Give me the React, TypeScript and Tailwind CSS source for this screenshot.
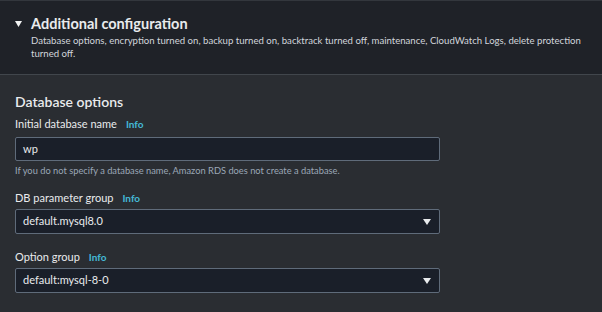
const Info = () => (
  <span className="text-[10px] font-bold text-[#44b9d6] ml-[9px]">Info</span>
);

const Caret = () => (
  <svg width="8" height="6" viewBox="0 0 8 6" className="fill-[#e9ebed]">
    <path d="M0 0h8L4 6z" />
  </svg>
);

const SelectBox = ({ value }: { value: string }) => (
  <div className="w-[425px] h-[25px] border border-[#5f6b7a] bg-[#1a1f29] rounded-[2px] flex items-center justify-between pl-[7px] pr-[8px] text-[11px] text-[#e9ebed]">
    <span>{value}</span>
    <Caret />
  </div>
);

export default function App() {
  return (
    <div
      className="w-[602px] h-[312px] bg-[#2a2d32] text-[#e9ebed] overflow-hidden"
      style={{ fontFamily: 'Lato, "Open Sans", sans-serif' }}
    >
      {/* header */}
      <div className="h-[75px] bg-[#1f2228] border-t border-[#33373d] border-b border-b-[#41464c] pl-[15px] pt-[13px]">
        <div className="flex items-center gap-[9px]">
          <svg width="7" height="6" viewBox="0 0 7 6" className="fill-[#f2f3f3]">
            <path d="M0 0h7L3.5 6z" />
          </svg>
          <h2 className="text-[14.5px] font-bold leading-[20px]">Additional configuration</h2>
        </div>
        <p className="ml-[16px] mt-[1px] text-[9.6px] leading-[12.5px] text-[#d1d5db] pr-[18px]">
          Database options, encryption turned on, backup turned on, backtrack turned off, maintenance, CloudWatch Logs, delete protection turned off.
        </p>
      </div>

      <div className="pl-[15px] pt-[16px]">
        <h3 className="text-[14px] leading-[21px] font-semibold">Database options</h3>

        <div className="mt-[4px] flex items-center text-[11px] leading-[16px]">
          Initial database name <Info />
        </div>
        <div className="mt-[5px] w-[425px] h-[24px] border border-[#5f6b7a] bg-[#1a1f29] rounded-[2px] flex items-center pl-[7px] text-[11px]">
          wp
        </div>
        <p className="mt-[3px] text-[9.3px] leading-[13px] text-[#9ba7b6]">
          If you do not specify a database name, Amazon RDS does not create a database.
        </p>

        <div className="mt-[13px] flex items-center text-[11px] leading-[16px]">
          DB parameter group <Info />
        </div>
        <div className="mt-[3px]">
          <SelectBox value="default.mysql8.0" />
        </div>

        <div className="mt-[15px] flex items-center text-[11px] leading-[16px]">
          Option group <Info />
        </div>
        <div className="mt-[3px]">
          <SelectBox value="default:mysql-8-0" />
        </div>
      </div>
    </div>
  );
}
